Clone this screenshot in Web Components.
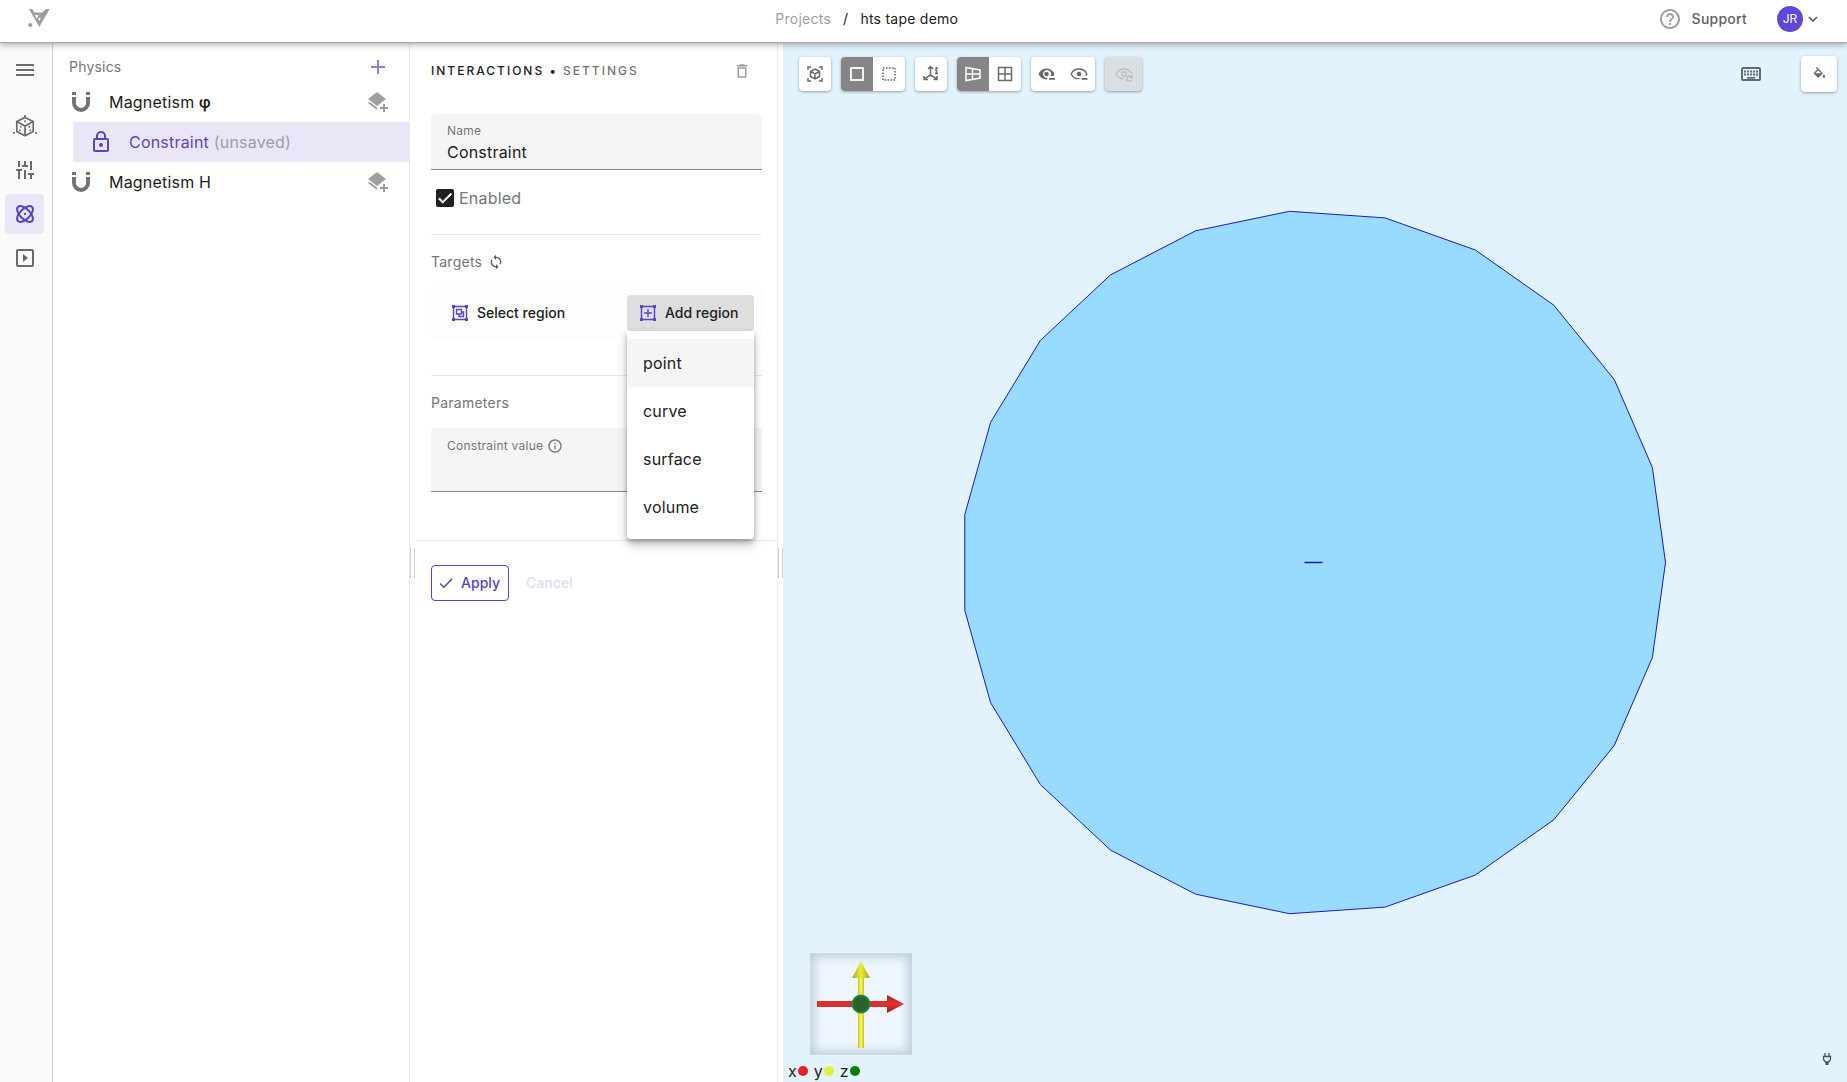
<!DOCTYPE html>
<html lang="en">
<head>
<meta charset="utf-8">
<title>hts tape demo</title>
<style>
  html, body { height: 100%; margin: 0; }
  body {
    font: 14px/20px Inter, "Liberation Sans", sans-serif;
    color: #212121;
    background: #fff;
    --accent: #5b42c8;
    --accent-soft: #eae6f8;
    --muted: #757575;
    --line: #e8e8e8;
  }
</style>
</head>
<body>
<sim-app></sim-app>
<script>
const ICONS = {
  logo: ['0 0 24 20', '<path fill="currentColor" fill-rule="evenodd" d="M3 0H6.500L8 3.500H16.300L20.300 0H23.500L13.300 18ZM8.700 6H12.500L10.800 9.500ZM12 9H14.700L13.300 12Z"/><path fill="currentColor" d="M16 4 20.300 0H23.500L17 11Z"/><circle cx="4.300" cy="16" r="2.100" fill="currentColor"/>'],
  menu: ['0 0 24 24', '<path fill="currentColor" d="M3 18h18v-2H3v2zm0-5h18v-2H3v2zm0-7v2h18V6H3z"/>'],
  cube: ['0 0 24 24', '<g fill="none" stroke="currentColor" stroke-width="1.700"><path d="M12 3.500 20.200 7.500V17.500L12 21.700 3.800 17.500V7.500Z"/><path d="M3.800 7.500 12 12 20.200 7.500M12 12V21.700M12 1V3.500"/></g><path fill="currentColor" d="M11.200 6.500h1.700v1.700h-1.700zM7 11.800h1.600v1.600H7zM15.400 11.800H17v1.600h-1.600zM6 15.500h1.600v1.600H6zM16.400 15.500H18v1.600h-1.600zM0 18h1.800v1.800H0zM22.200 18H24v1.800h-1.800z"/>'],
  sliders: ['0 0 24 24', '<path fill="none" stroke="currentColor" stroke-width="2" d="M6 3V9M3 12H9M6 12V21M12 3V8M9 8H15M12 12V21M18 3V12M15 16H21M18 16V21"/>'],
  atom: ['0 0 24 24', '<g fill="none" stroke="currentColor" stroke-width="2"><ellipse cx="12" cy="12" rx="5" ry="10" transform="rotate(45 12 12)"/><ellipse cx="12" cy="12" rx="5" ry="10" transform="rotate(-45 12 12)"/></g><circle cx="12" cy="12" r="1.200" fill="currentColor"/>'],
  play: ['0 0 24 24', '<rect x="4" y="4" width="16" height="16" rx="1" fill="none" stroke="currentColor" stroke-width="2"/><path fill="currentColor" d="M10 8v8l5-4z"/>'],
  plus: ['0 0 24 24', '<path fill="currentColor" d="M19 13h-6v6h-2v-6H5v-2h6V5h2v6h6v2z"/>'],
  magnet: ['0 0 20 20', '<path fill="currentColor" d="M1 0H5V3H1zM15 0H19V3H15zM1 5H5V11a5 5 0 0 0 10 0V5H19V11a9 9 0 0 1-18 0z"/>'],
  layers: ['0 0 20 20', '<path fill="currentColor" d="M9 0 18 7 9 14 0 7ZM0 11 1.500 9.800 9.500 16 9 18ZM15 12H17V15H20V17H17V20H15V17H12V15H15Z"/>'],
  lock: ['0 0 24 24', '<path fill="currentColor" d="M12 17a2 2 0 1 1 0-4 2 2 0 0 1 0 4M18 20V10H6V20H18M18 8A2 2 0 0 1 20 10V20A2 2 0 0 1 18 22H6A2 2 0 0 1 4 20V10A2 2 0 0 1 6 8H7V6A5 5 0 0 1 17 6V8H18M12 3A3 3 0 0 0 9 6V8H15V6A3 3 0 0 0 12 3Z"/>'],
  trash: ['0 0 24 24', '<path fill="currentColor" d="M6 19c0 1.100.9 2 2 2h8c1.100 0 2-.9 2-2V7H6v12zM8 9h8v10H8V9zm7.500-5l-1-1h-5l-1 1H5v2h14V4z"/>'],
  sync: ['0 0 24 24', '<path fill="currentColor" d="M12 4V1L8 5l4 4V6c3.310 0 6 2.690 6 6 0 1.010-.25 1.970-.7 2.800l1.460 1.460C19.540 15.030 20 13.570 20 12c0-4.420-3.580-8-8-8zm0 14c-3.310 0-6-2.690-6-6 0-1.010.25-1.970.7-2.800L5.240 7.740C4.460 8.970 4 10.430 4 12c0 4.420 3.580 8 8 8v3l4-4-4-4v3z"/>'],
  info: ['0 0 24 24', '<path fill="currentColor" d="M11 7h2v2h-2zm0 4h2v6h-2zm1-9C6.480 2 2 6.480 2 12s4.480 10 10 10 10-4.480 10-10S17.520 2 12 2zm0 18c-4.410 0-8-3.590-8-8s3.590-8 8-8 8 3.590 8 8-3.590 8-8 8z"/>'],
  help: ['0 0 24 24', '<path fill="currentColor" d="M11 18h2v-2h-2v2zm1-16C6.480 2 2 6.480 2 12s4.480 10 10 10 10-4.480 10-10S17.520 2 12 2zm0 18c-4.410 0-8-3.590-8-8s3.590-8 8-8 8 3.590 8 8-3.590 8-8 8zm0-14c-2.210 0-4 1.790-4 4h2c0-1.100.9-2 2-2s2 .9 2 2c0 2-3 1.750-3 5h2c0-2.250 3-2.500 3-5 0-2.210-1.790-4-4-4z"/>'],
  chevron: ['0 0 12 12', '<path fill="none" stroke="currentColor" stroke-width="1.700" d="M2 4 6 8 10 4"/>'],
  check: ['0 0 24 24', '<path fill="currentColor" d="M9 16.170 4.830 12l-1.420 1.410L9 19 21 7l-1.410-1.410z"/>'],
  regionSelect: ['0 0 18 18', '<g fill="none" stroke="currentColor" stroke-width="1.400"><path d="M2.500 2.500H15.500V15.500H2.500Z"/><path d="M5.500 5.500H10.500V10H5.500ZM10.500 8H12.500V12.500H8V10"/></g><path fill="currentColor" d="M1 1h3v3H1zM14 1h3v3h-3zM1 14h3v3H1zM14 14h3v3h-3z"/>'],
  regionAdd: ['0 0 18 18', '<g fill="none" stroke="currentColor" stroke-width="1.400"><path d="M2.500 2.500H15.500V15.500H2.500ZM9 5V13M5 9H13"/></g><path fill="currentColor" d="M1 1h3v3H1zM14 1h3v3h-3zM1 14h3v3H1zM14 14h3v3h-3z"/>'],
  fit: ['0 0 18 18', '<g fill="none" stroke="currentColor" stroke-width="1.500"><path d="M2 5V2H5M13 2H16V5M16 13V16H13M5 16H2V13"/><path d="M9 4 13.500 6.500V11.500L9 14 4.500 11.500V6.500ZM4.500 6.500 9 9 13.500 6.500M9 9V14"/></g>'],
  square: ['0 0 18 18', '<rect x="3" y="3" width="12" height="12" fill="none" stroke="currentColor" stroke-width="1.800"/>'],
  dashed: ['0 0 18 18', '<rect x="3" y="3" width="12" height="12" fill="none" stroke="currentColor" stroke-width="1.600" stroke-dasharray="1.600 1.400"/>'],
  axes: ['0 0 18 18', '<g fill="none" stroke="currentColor" stroke-width="1.500"><path d="M8.500 2V10L2 14.200M8.500 10 15 14.200M6 4 8.500 1.500 11 4M2 11V14.500H6M15 11V14.500H11.500M13 5H14.500V8M13 8.500H16"/></g><path fill="currentColor" d="M13.500 2h2v2h-2z"/>'],
  perspective: ['0 0 18 18', '<path fill="none" stroke="currentColor" stroke-width="1.500" d="M2 2.500 16 5V13L2 15.500ZM8.500 3.500V14.500M2 9H16"/>'],
  grid: ['0 0 18 18', '<path fill="none" stroke="currentColor" stroke-width="1.500" d="M2.500 2.500H15.500V15.500H2.500ZM9 2.500V15.500M2.500 9H15.500"/>'],
  eyeFill: ['0 0 18 18', '<path fill="currentColor" fill-rule="evenodd" d="M.5 9C2 5.500 5 3.500 8.500 3.500S15 5.500 16.500 9L15.500 11H12.500A4 4 0 1 0 9 13V14.400C5 14.500 2 12.500.5 9ZM8.500 6.700a2.300 2.300 0 1 1 0 4.600 2.300 2.300 0 0 1 0-4.600ZM11 13h6v1.700h-6z"/>'],
  eye: ['0 0 18 18', '<path fill="none" stroke="currentColor" stroke-width="1.400" d="M9.500 13.500C5.500 14 2.500 12 1.200 9 2.500 6 5.500 4 9 4S15.500 6 16.800 9Q16.400 10 15.800 10.800"/><circle cx="9" cy="9" r="2.300" fill="currentColor"/><path fill="currentColor" d="M11.500 13h6v1.700h-6z"/>'],
  eyeReset: ['0 0 18 18', '<g fill="none" stroke="currentColor" stroke-width="1.400"><path d="M9 13.500C5.500 14 2.500 12 1.200 9 2.500 6 5.500 4 9 4S15.500 6 16.800 9"/><circle cx="9" cy="9" r="2.300"/><path d="M16 11.500A2.600 2.600 0 1 0 16.800 14.500M17 10V12.500H14.500"/></g>'],
  keyboard: ['0 0 22 16', '<rect x="2" y="2" width="18" height="12" rx="1" fill="none" stroke="currentColor" stroke-width="2"/><path fill="none" stroke="currentColor" stroke-width="2" stroke-dasharray="2 1" d="M4 5.500H18M4 8.500H18"/><path fill="currentColor" d="M7 11h8v1.700H7z"/>'],
  fill: ['0 0 24 24', '<path fill="currentColor" d="M16.560 8.940 7.620 0 6.210 1.410 8.590 3.790 3.440 8.940a1.500 1.500 0 0 0 0 2.120L8.940 16.560a1.500 1.500 0 0 0 2.120 0L16.560 11.060a1.500 1.500 0 0 0 0-2.120M5.210 10 10 5.210 14.790 10M19 11.500S17 13.670 17 15A2 2 0 0 0 21 15C21 13.670 19 11.500 19 11.500Z"/>'],
  plug: ['0 0 12 14', '<path fill="none" stroke="currentColor" stroke-width="1.300" d="M4 1V4M8 1V4M2.500 4.500H9.500V7.500L7.500 10H4.500L2.500 7.500Z"/><path fill="currentColor" d="M4.500 10h3v3h-3z"/>']
};

class Base extends HTMLElement {
  constructor() { super(); this.attachShadow({ mode: 'open' }); }
  connectedCallback() { this.shadowRoot.innerHTML = '<style>*{box-sizing:border-box}button,input{font:inherit;color:inherit}button{border:0;background:none;padding:0;cursor:pointer}</style>' + this.view(); }
}
const attr = (el, n, d = '') => el.getAttribute(n) ?? d;

customElements.define('ui-icon', class extends Base {
  view() {
    const [box, body] = ICONS[attr(this, 'name')];
    const s = attr(this, 'size', '24'), h = attr(this, 'height', s);
    return `<style>:host{display:block;flex:none;width:${s}px;height:${h}px}svg{display:block;width:100%;height:100%}</style><svg viewBox="${box}" aria-hidden="true">${body}</svg>`;
  }
});

customElements.define('app-header', class extends Base {
  view() { return `<style>
    :host{display:flex;justify-content:space-between;align-items:center;height:43px;padding:0 28px 4px 26px;background:#fff;border-bottom:1px solid #a8a8a8;box-shadow:0 2px 6px rgba(0,0,0,.3);position:relative;z-index:5}
    .brand{width:50px;color:#9e9e9e}
    nav{display:flex;gap:12px;letter-spacing:.25px}
    a{color:#9e9e9e;text-decoration:none}
    .right,.right button{display:flex;align-items:center}
    .right{gap:30px}
    .support{gap:10px;font-weight:500;color:#616161;letter-spacing:.25px}
    .support ui-icon{color:#9e9e9e}
    .user{gap:4px;color:#616161}
    .avatar{width:26px;height:26px;border-radius:50%;background:#6246d6;color:#fff;font-size:12px;line-height:26px;text-align:center}
    </style>
    <a class="brand" href="#" aria-label="Home"><ui-icon name="logo" size="24" height="20"></ui-icon></a>
    <nav><a href="#">Projects</a><span>/</span><span>hts tape demo</span></nav>
    <div class="right"><button class="support"><ui-icon name="help" size="24"></ui-icon>Support</button>
    <button class="user"><span class="avatar">JR</span><ui-icon name="chevron" size="12"></ui-icon></button></div>`; }
});

customElements.define('nav-rail', class extends Base {
  view() { return `<style>
    :host{display:flex;flex-direction:column;gap:4px;width:53px;padding:7px 5px;background:#fafafa;border-right:1px solid #d0d0d0;color:#6b6b6b}
    button{display:grid;place-items:center;width:39px;height:40px;border-radius:4px}
    button:first-of-type{margin-bottom:12px}
    .on{background:var(--accent-soft);color:var(--accent)}
    </style>
    <button aria-label="Menu"><ui-icon name="menu"></ui-icon></button>
    <button aria-label="Geometry"><ui-icon name="cube"></ui-icon></button>
    <button aria-label="Properties"><ui-icon name="sliders"></ui-icon></button>
    <button class="on" aria-label="Physics"><ui-icon name="atom"></ui-icon></button>
    <button aria-label="Simulation"><ui-icon name="play"></ui-icon></button>`; }
});

customElements.define('tree-row', class extends Base {
  view() {
    const child = this.hasAttribute('selected');
    return `<style>
    :host{display:flex;align-items:center;height:40px;padding:0 21px 0 18px;font-size:16px;line-height:24px;letter-spacing:.2px}
    :host([selected]){margin-left:20px;padding-left:16px;background:var(--accent-soft);color:var(--accent)}
    .lead{width:${child ? 40 : 38}px;color:#757575}
    :host([selected]) .lead{color:var(--accent)}
    .text{flex:1}
    button{color:#9e9e9e}
    </style><span class="lead"><ui-icon name="${attr(this, 'icon')}" size="${child ? 24 : 20}"></ui-icon></span>
    <span class="text"><slot></slot></span>${child ? '' : '<button aria-label="Add interaction"><ui-icon name="layers" size="20"></ui-icon></button>'}`;
  }
});

customElements.define('physics-panel', class extends Base {
  view() { return `<style>
    :host{display:block;width:357px;border-right:1px solid var(--line);background:#fff}
    header{display:flex;justify-content:space-between;align-items:center;height:39px;padding:8px 19px 0 16px;color:var(--muted);letter-spacing:.2px}
    header button{color:#9181da}
    .note{color:#9e9bad}
    .sym{font-family:Roboto,"Liberation Sans",sans-serif;font-weight:500}
    </style>
    <header><span>Physics</span><button aria-label="Add physics"><ui-icon name="plus" size="24"></ui-icon></button></header>
    <tree-row icon="magnet">Magnetism <span class="sym">φ</span></tree-row>
    <tree-row icon="lock" selected>Constraint <span class="note">(unsaved)</span></tree-row>
    <tree-row icon="magnet">Magnetism H</tree-row>`; }
});

customElements.define('text-field', class extends Base {
  view() { return `<style>
    :host{display:flex;flex-direction:column;height:56px;padding:7px 16px 0;background:#f5f5f5;border-bottom:1px solid #8c8c8c;border-radius:4px 4px 0 0}
    :host([tall]){height:64px;padding-top:8px}
    label{display:flex;align-items:center;gap:4px;font-size:12px;line-height:20px;color:var(--muted);letter-spacing:.25px}
    input{width:100%;height:22px;padding:0;border:0;outline:0;background:none;font-size:16px;letter-spacing:.2px}
    </style><label for="f">${attr(this, 'label')}<slot></slot></label><input id="f" value="${attr(this, 'value')}">`; }
});

customElements.define('drop-menu', class extends Base {
  view() { return `<style>
    :host{display:block;background:#fff;padding:8px 0;border-radius:0 0 4px 4px;box-shadow:0 3px 5px rgba(0,0,0,.25),0 6px 12px rgba(0,0,0,.2)}
    button{display:block;width:100%;height:48px;padding:0 16px;text-align:left;font-size:16px;letter-spacing:.2px}
    button:first-of-type{background:#f5f5f5}
    </style>${attr(this, 'items').split(',').map(t => `<button role="menuitem">${t}</button>`).join('')}`; }
});

customElements.define('split-handle', class extends Base {
  view() { return `<style>:host{display:flex;align-items:center;justify-content:center;width:5px;background:#fff}
    i{width:5px;height:30px;border:solid #cfcfcf;border-width:0 1px}</style><i></i>`; }
});

customElements.define('settings-panel', class extends Base {
  view() { return `<style>
    :host{display:block;width:363px;background:#fff;border-right:1px solid var(--line)}
    section{padding:16px 15px 0 16px}
    .head{display:flex;justify-content:space-between;align-items:center;height:24px;padding-right:11px;margin-bottom:31px}
    h1{margin:0;font-size:12px;font-weight:500;letter-spacing:2px}
    h1 span{color:var(--muted)}
    .head button{color:#9e9e9e}
    .check{display:flex;align-items:center;gap:5px;height:24px;margin:16px 0 24px 5px;font-size:16px;color:var(--muted);letter-spacing:.2px}
    .box{display:grid;width:18px;height:18px}
    .box>*{grid-area:1/1}
    .box input{appearance:none;width:18px;height:18px;margin:0;border-radius:2px;background:#212121}
    .box ui-icon{color:#fff;pointer-events:none;stroke:#fff}
    hr{margin:0;border:0;border-top:1px solid var(--line)}
    h2{display:flex;align-items:center;gap:6px;height:20px;margin:17px 0 15px;font-size:14px;font-weight:400;color:var(--muted);letter-spacing:.25px}
    h2 ui-icon{color:#616161}
    .targets{display:flex;justify-content:space-between;padding:8px 8px 8px 12px;margin-bottom:36px;background:#fdfdfd}
    .btn{display:flex;align-items:center;gap:8px;height:36px;padding:0 16px 0 8px;font-weight:500;border-radius:4px}
    .btn ui-icon{color:var(--accent)}
    .add{position:relative}
    .add .btn{width:127px;padding:0 12px;background:#dedede}
    drop-menu{position:absolute;top:100%;left:0;right:0;z-index:3}
    .last{margin-bottom:48px}
    footer{display:flex;align-items:center;gap:17px;padding:24px 16px}
    .apply{display:flex;align-items:center;justify-content:space-between;width:78px;height:36px;padding:0 8px 0 5px;border:1px solid var(--accent);border-radius:4px;color:var(--accent);font-weight:500}
    .cancel{color:#e0dbf5;font-weight:500}
    </style>
    <section>
      <div class="head"><h1>INTERACTIONS • <span>SETTINGS</span></h1><button aria-label="Delete"><ui-icon name="trash" size="18"></ui-icon></button></div>
      <text-field label="Name" value="Constraint"></text-field>
      <div class="check"><span class="box"><input type="checkbox" id="en" checked><ui-icon name="check" size="18"></ui-icon></span><label for="en">Enabled</label></div>
      <hr>
      <h2>Targets <ui-icon name="sync" size="16"></ui-icon></h2>
      <div class="targets">
        <button class="btn"><ui-icon name="regionSelect" size="18"></ui-icon>Select region</button>
        <div class="add"><button class="btn"><ui-icon name="regionAdd" size="18"></ui-icon>Add region</button>
        <drop-menu items="point,curve,surface,volume" role="menu"></drop-menu></div>
      </div>
      <hr>
      <h2>Parameters</h2>
      <text-field class="last" tall label="Constraint value"><ui-icon name="info" size="16"></ui-icon></text-field>
    </section>
    <hr>
    <footer><button class="apply"><ui-icon name="check" size="18"></ui-icon>Apply</button><button class="cancel" disabled>Cancel</button></footer>`; }
});

customElements.define('tool-group', class extends Base {
  view() {
    return `<style>
    :host{display:flex;border-radius:4px;overflow:hidden;background:#fff;color:#6b6b6b;box-shadow:0 1px 3px rgba(0,0,0,.35)}
    :host([off]){background:#dcdfe1;color:#bdbdbd}
    button{display:grid;place-items:center;width:32px;height:34px}
    :host([off]) button{width:37px}
    .on{background:#858585;color:#fff}
    </style>${attr(this, 'icons').split(',').map(i => { const on = i[0] === '*'; const n = i.replace('*', ''); return `<button aria-label="${n}" class="${on ? 'on' : ''}"><ui-icon name="${n}" size="18"></ui-icon></button>`; }).join('')}`;
  }
});

customElements.define('axis-gizmo', class extends Base {
  view() { return `<style>:host{display:block;width:102px;height:102px;background:#eef7ff;box-shadow:inset 0 0 10px 5px #c3d2dd}svg{display:block}</style>
    <svg viewBox="0 0 102 102" aria-hidden="true">
    <defs><linearGradient id="y"><stop offset="0" stop-color="#a8a820"/><stop offset=".5" stop-color="#eeee38"/><stop offset="1" stop-color="#a0a020"/></linearGradient>
    <linearGradient id="r" x2="0" y2="1"><stop offset="0" stop-color="#b02020"/><stop offset=".5" stop-color="#e83232"/><stop offset="1" stop-color="#a01c1c"/></linearGradient></defs>
    <path fill="#c9c93c" d="M48 24h6v71h-6z"/><path fill="#f6f640" d="M49.500 24h3v71h-3z"/><path fill="url(#y)" d="M51 8 60 25H42Z"/>
    <path fill="#d93030" d="M7 48h72v6H7z"/><path fill="url(#r)" d="M94 51 77 60V42Z"/>
    <circle cx="51" cy="51" r="8.500" fill="#2d6030" stroke="#1f8a2b" stroke-width="1.800"/></svg>`; }
});

customElements.define('axis-legend', class extends Base {
  view() { return `<style>:host{display:flex;gap:6px;font-size:16px;line-height:20px}
    span{display:flex;align-items:center;gap:1px}i{width:10px;height:10px;border-radius:50%}</style>
    <span>x<i style="background:#e92020"></i></span><span>y<i style="background:#e6ee3c"></i></span><span>z<i style="background:#078007"></i></span>`; }
});

customElements.define('model-view', class extends Base {
  view() {
    const pts = Array.from({ length: 23 }, (_, k) => {
      const a = 2 * Math.PI * k / 23;
      return `${(530.5 + 352 * Math.cos(a)).toFixed(1)},${(519.5 + 352 * Math.sin(a)).toFixed(1)}`;
    }).join(' ');
    return `<style>
    :host{display:grid;flex:1;min-width:0;background:#e2f3fe;grid-template:minmax(0,1fr)/minmax(0,1fr)}
    .scene,.overlay{grid-area:1/1}
    .scene{width:100%;height:100%}
    .overlay{display:flex;flex-direction:column;justify-content:space-between;padding:13px 10px 1px 5px}
    .bar{display:flex;align-items:center;justify-content:space-between}
    .tools{display:flex;gap:10px;padding-left:11px}
    .tools.end{align-items:center;gap:39px}
    .end button{color:#616a70}
    .paint{display:grid;place-items:center;width:36px;height:36px;border-radius:4px;background:#fff;box-shadow:0 1px 3px rgba(0,0,0,.35)}
    .bottom{display:flex;justify-content:space-between;align-items:flex-end}
    axis-gizmo{margin:0 0 6px 22px}
    .plug{padding:0 4px 15px;color:#4a5257}
    </style>
    <svg class="scene" viewBox="0 0 1064 1039" role="img" aria-label="Model"><polygon points="${pts}" fill="#99daff" stroke="#1616d8"/><path d="M521.500 519.500H539.500" stroke="#1616c0" stroke-width="1.500"/></svg>
    <div class="overlay">
      <div class="bar"><div class="tools">
        <tool-group icons="fit"></tool-group><tool-group icons="*square,dashed"></tool-group><tool-group icons="axes"></tool-group>
        <tool-group icons="*perspective,grid"></tool-group><tool-group icons="eyeFill,eye"></tool-group><tool-group off icons="eyeReset"></tool-group></div>
        <div class="tools end"><button aria-label="Shortcuts"><ui-icon name="keyboard" size="22" height="16"></ui-icon></button><button class="paint" aria-label="Colours"><ui-icon name="fill" size="15"></ui-icon></button></div></div>
      <div class="bottom"><div><axis-gizmo></axis-gizmo><axis-legend></axis-legend></div><div class="plug"><ui-icon name="plug" size="12" height="14"></ui-icon></div></div>
    </div>`;
  }
});

customElements.define('sim-app', class extends Base {
  view() { return `<style>:host{display:flex;flex-direction:column;height:100vh}main{display:flex;flex:1;min-height:0}</style>
    <app-header></app-header>
    <main><nav-rail></nav-rail><physics-panel></physics-panel><split-handle></split-handle><settings-panel></settings-panel><split-handle></split-handle><model-view></model-view></main>`; }
});
</script>
</body>
</html>
